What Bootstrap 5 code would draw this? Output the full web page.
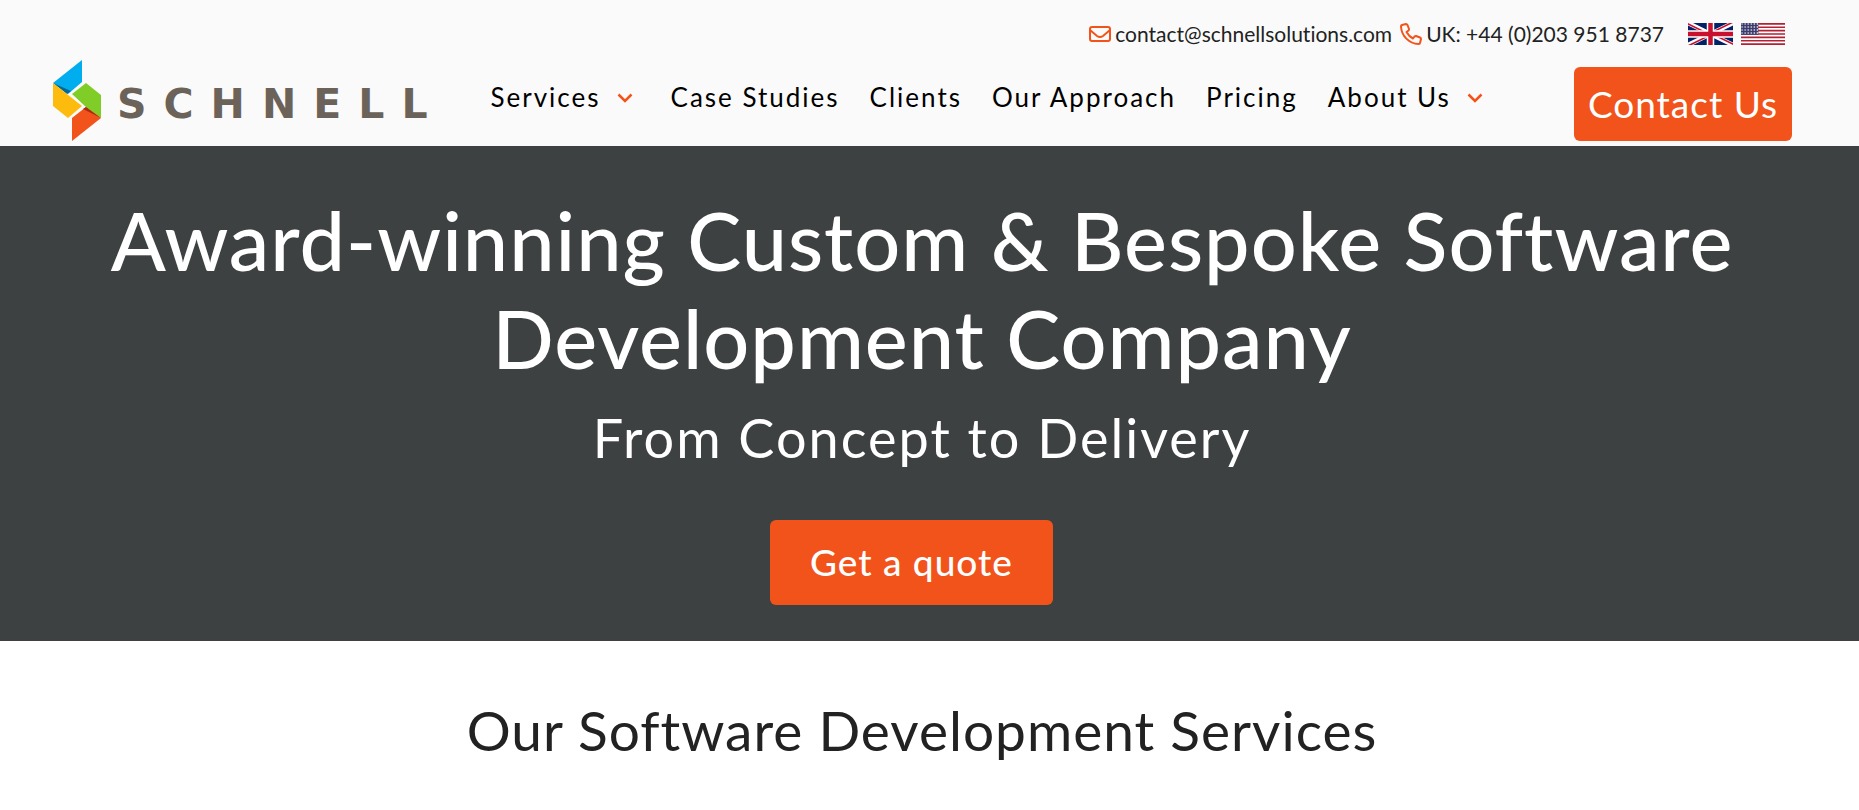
<!DOCTYPE html>
<html lang="en">
<head>
<meta charset="utf-8">
<meta name="viewport" content="width=device-width, initial-scale=1">
<title>Schnell Solutions</title>
<link href="https://cdn.jsdelivr.net/npm/bootstrap@5.3.0/dist/css/bootstrap.min.css" rel="stylesheet">
<style>
  :root { --brand: #f2531b; }
  body { font-family: Lato, "Liberation Sans", sans-serif; color: #222; background: #fff; }
  .site-header { background: #fafafa; padding: 20px 67px 5px 53px; }
  .brand-link { color: #6b6259; text-decoration: none; }
  .brand-word { font: 700 41px/48px "DejaVu Sans", sans-serif; letter-spacing: 17px; }
  .top-line { font-size: 21px; line-height: 27px; padding-right: 7px; font-variant-ligatures: none; }
  .top-line a { color: #222; text-decoration: none; }
  .main-nav { margin-right: 67px; }
  .main-nav .nav-link { font-size: 26px; line-height: 32px; letter-spacing: 2px; color: #000; padding: 14px 15px; white-space: nowrap; }
  .main-nav svg { vertical-align: 4px; }
  .btn-brand { background: var(--brand); color: #fff; font-size: 37px; line-height: 54px; letter-spacing: 1px; border: 0; border-radius: 6px; white-space: nowrap; }
  .btn-brand:hover { background: #d94512; color: #fff; }
  .btn-contact { padding: 10px 14px; }
  .btn-quote { padding: 15px 40px 16px; font-weight: 500; }
  .hero { background: #3d4142; color: #fff; padding: 45px 97px 36px 82px; }
  .hero h1 { font-size: 81px; line-height: 98px; font-weight: 500; letter-spacing: 1px; margin: 0; }
  .tagline { font-size: 54px; line-height: 64px; font-weight: 400; letter-spacing: 2px; margin: 19px 0 50px; }
  .quote-line { padding-right: 21px; }
  .services { padding: 56px 15px 48px 0; }
  .services h2 { font-size: 55px; line-height: 66px; font-weight: 400; letter-spacing: 1px; margin: 0; }
</style>
</head>
<body>
<header class="site-header d-flex align-items-end justify-content-between">
  <a class="brand-link d-flex align-items-center" href="#" aria-label="Schnell">
    <svg width="48" height="82" viewBox="0 0 48 82" aria-hidden="true">
      <path fill="#00adef" d="M0 24 29 1V23L15 35Z"/>
      <path fill="#076893" d="M0 24 18 32 14 35Z"/>
      <path fill="#fdbc0d" d="M0 24 29 47 15 59 0 47Z"/>
      <path fill="#81cd28" d="M19 35 33 24 48 36V59L33 48Z"/>
      <path fill="#f2531b" d="M19 59 33 48 48 59 19 82Z"/>
      <path fill="#a72c0b" d="M30 50 33 48 48 59Z"/>
    </svg>
    <span class="brand-word ps-3 pt-2">SCHNELL</span>
  </a>
  <div>
    <div class="top-line d-flex align-items-center justify-content-end">
      <a class="d-flex align-items-center" href="mailto:contact@schnellsolutions.com">
        <svg class="me-1" width="22" height="18" viewBox="0 0 22 18" fill="none" stroke="#f2531b" stroke-width="2" aria-hidden="true"><rect x="1" y="2" width="20" height="14" rx="2"/><path d="M1 5 8 11Q11 13 14 11L21 5"/></svg>contact@schnellsolutions.com</a>
      <a class="d-flex align-items-center ms-2" href="tel:+442039518737">
        <svg class="me-1" width="22" height="22" viewBox="0 0 22 22" fill="none" stroke="#f2531b" stroke-width="2" stroke-linejoin="round" aria-hidden="true"><path d="M2 2 6 1Q7 1 7.500 2L9 6Q9 7 8.500 7.500L6.500 9Q9 13.500 13 15.500L14.500 13.500Q15 13 16 13L20 14.500Q21 15 21 16L20 20Q20 21 18.500 21C9 20.500 1.500 13 1 3.500Q1 2.300 2 2Z"/></svg>UK: +44 (0)203 951 8737</a>
      <a class="d-flex ms-4" href="#" aria-label="United Kingdom">
        <svg width="45" height="22" viewBox="0 0 60 30" preserveAspectRatio="none" aria-hidden="true"><path fill="#012169" d="M0 0H60V30H0Z"/><path stroke="#fff" stroke-width="6" d="M0 0 60 30M60 0 0 30"/><path fill="#c8102e" d="M0 0 30 15H25L0 2.500ZM60 0 30 15V12.500L55 0ZM60 30 30 15H35L60 27.500ZM0 30 30 15V17.500L5 30Z"/><path stroke="#fff" stroke-width="10" d="M30 0V30M0 15H60"/><path stroke="#c8102e" stroke-width="6" d="M30 0V30M0 15H60"/></svg></a>
      <a class="d-flex ms-2" href="#" aria-label="United States">
        <svg width="44" height="22" viewBox="0 0 43 22" preserveAspectRatio="none" aria-hidden="true">
          <defs><pattern id="stars" width="3" height="3" patternUnits="userSpaceOnUse"><circle cx="1" cy="1" r=".7" fill="#fff"/></pattern></defs>
          <path fill="#fff" d="M0 0H43V22H0Z"/><path stroke="#b22234" stroke-width="1.700" d="M0 .85H43M0 4.230H43M0 7.620H43M0 11H43M0 14.380H43M0 17.770H43M0 21.150H43"/><path fill="#3c3b6e" d="M0 0H17V11.800H0Z"/><path fill="url(#stars)" d="M0 0H17V11.800H0Z"/></svg></a>
    </div>
    <div class="d-flex pt-3 mt-1 justify-content-end">
      <nav class="main-nav nav flex-nowrap align-items-start" aria-label="Main">
        <a class="nav-link" href="#">Services<svg class="ms-3 me-2" width="16" height="10" viewBox="0 0 16 10" fill="none" stroke="#f2531b" stroke-width="2.500" aria-hidden="true"><path d="M1.500 1.500 8 8 14.500 1.500"/></svg></a>
        <a class="nav-link" href="#">Case Studies</a>
        <a class="nav-link" href="#">Clients</a>
        <a class="nav-link" href="#">Our Approach</a>
        <a class="nav-link" href="#">Pricing</a>
        <a class="nav-link pe-0" href="#">About Us<svg class="ms-3 me-2" width="16" height="10" viewBox="0 0 16 10" fill="none" stroke="#f2531b" stroke-width="2.500" aria-hidden="true"><path d="M1.500 1.500 8 8 14.500 1.500"/></svg></a>
      </nav>
      <button class="btn btn-brand btn-contact ms-3" type="button">Contact Us</button>
    </div>
  </div>
</header>
<main>
  <section class="hero text-center">
    <h1>Award-winning Custom &amp; Bespoke Software Development Company</h1>
    <p class="tagline">From Concept to Delivery</p>
    <div class="quote-line"><button class="btn btn-brand btn-quote" type="button">Get a quote</button></div>
  </section>
  <section class="services text-center">
    <h2>Our Software Development Services</h2>
  </section>
</main>
<script src="https://cdn.jsdelivr.net/npm/bootstrap@5.3.0/dist/js/bootstrap.bundle.min.js"></script>
</body>
</html>
